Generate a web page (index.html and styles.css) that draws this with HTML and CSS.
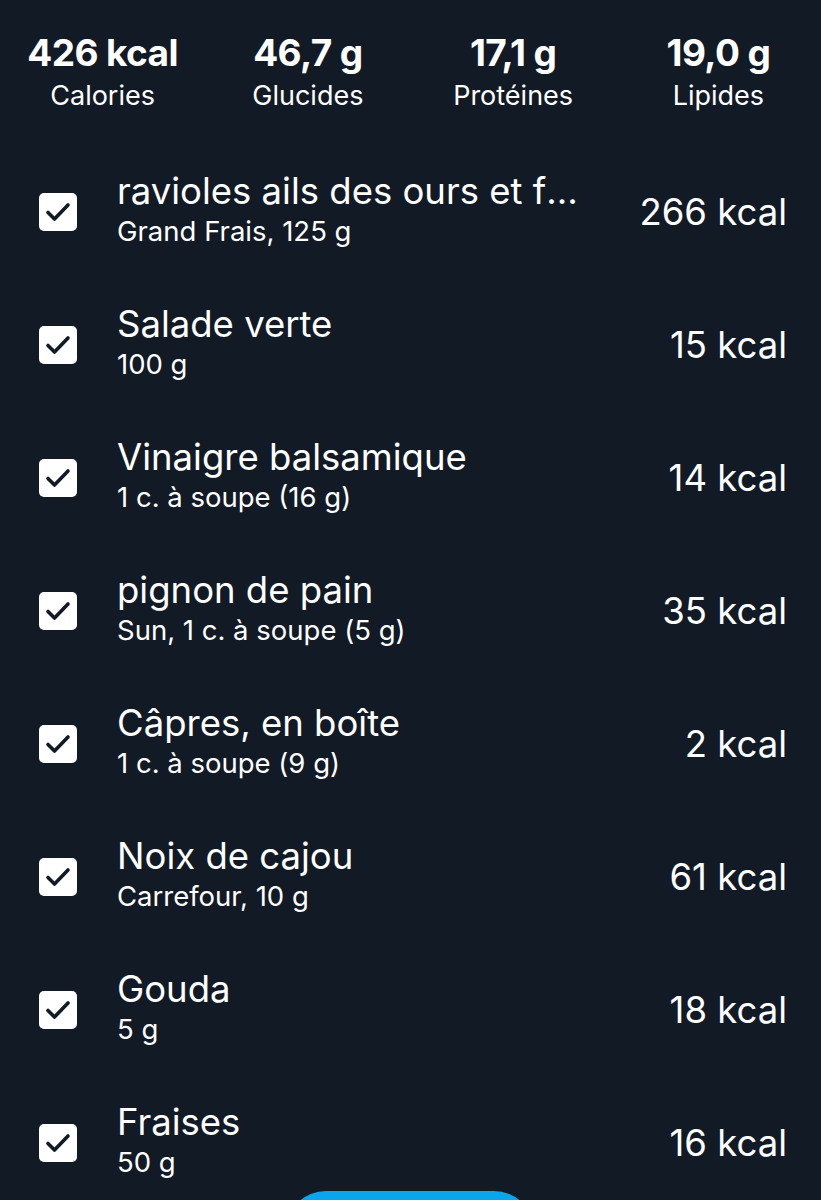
FILE: index.html
```html
<!DOCTYPE html>
<html lang="fr">
<head>
    <meta charset="UTF-8">
    <meta name="viewport" content="width=device-width, initial-scale=1.0">
    <title>Repas</title>
    <link rel="stylesheet" href="styles.css">
</head>
<body>

<div class="screen">
    <!-- Totaux du repas -->
    <div class="totals">
        <div class="total"><div class="value">426 kcal</div><div class="label">Calories</div></div>
        <div class="total"><div class="value">46,7 g</div><div class="label">Glucides</div></div>
        <div class="total"><div class="value">17,1 g</div><div class="label">Protéines</div></div>
        <div class="total"><div class="value">19,0 g</div><div class="label">Lipides</div></div>
    </div>

    <!-- Liste des aliments -->
    <ul class="foods">
        <li class="food">
            <span class="check"><svg viewBox="0 0 38 38"><path d="M9 19.5l6.5 6.5 13.5-14"/></svg></span>
            <div class="info"><div class="name">ravioles ails des ours et fraîcheur</div><div class="detail">Grand Frais, 125 g</div></div>
            <div class="kcal">266 kcal</div>
        </li>
        <li class="food">
            <span class="check"><svg viewBox="0 0 38 38"><path d="M9 19.5l6.5 6.5 13.5-14"/></svg></span>
            <div class="info"><div class="name">Salade verte</div><div class="detail">100 g</div></div>
            <div class="kcal">15 kcal</div>
        </li>
        <li class="food">
            <span class="check"><svg viewBox="0 0 38 38"><path d="M9 19.5l6.5 6.5 13.5-14"/></svg></span>
            <div class="info"><div class="name">Vinaigre balsamique</div><div class="detail">1 c. à soupe (16 g)</div></div>
            <div class="kcal">14 kcal</div>
        </li>
        <li class="food">
            <span class="check"><svg viewBox="0 0 38 38"><path d="M9 19.5l6.5 6.5 13.5-14"/></svg></span>
            <div class="info"><div class="name">pignon de pain</div><div class="detail">Sun, 1 c. à soupe (5 g)</div></div>
            <div class="kcal">35 kcal</div>
        </li>
        <li class="food">
            <span class="check"><svg viewBox="0 0 38 38"><path d="M9 19.5l6.5 6.5 13.5-14"/></svg></span>
            <div class="info"><div class="name">Câpres, en boîte</div><div class="detail">1 c. à soupe (9 g)</div></div>
            <div class="kcal">2 kcal</div>
        </li>
        <li class="food">
            <span class="check"><svg viewBox="0 0 38 38"><path d="M9 19.5l6.5 6.5 13.5-14"/></svg></span>
            <div class="info"><div class="name">Noix de cajou</div><div class="detail">Carrefour, 10 g</div></div>
            <div class="kcal">61 kcal</div>
        </li>
        <li class="food">
            <span class="check"><svg viewBox="0 0 38 38"><path d="M9 19.5l6.5 6.5 13.5-14"/></svg></span>
            <div class="info"><div class="name">Gouda</div><div class="detail">5 g</div></div>
            <div class="kcal">18 kcal</div>
        </li>
        <li class="food">
            <span class="check"><svg viewBox="0 0 38 38"><path d="M9 19.5l6.5 6.5 13.5-14"/></svg></span>
            <div class="info"><div class="name">Fraises</div><div class="detail">50 g</div></div>
            <div class="kcal">16 kcal</div>
        </li>
    </ul>

    <!-- Bouton flottant (en bas, à moitié visible) -->
    <button class="add-btn" aria-label="Ajouter"></button>
</div>

</body>
</html>
```
FILE: styles.css
```css
body {
    margin: 0;
    background-color: #121a26;
    color: #ffffff;
    font-family: Inter, "Noto Sans", sans-serif;
}

.screen {
    position: relative;
    height: 1200px;
    overflow: hidden;
}

.totals {
    display: grid;
    grid-template-columns: repeat(4, 1fr);
    padding-top: 31px;
    text-align: center;
}

.value {
    font-size: 37px;
    font-weight: 700;
    line-height: 44px;
    letter-spacing: -0.6px;
}

.label {
    font-size: 27px;
    line-height: 32px;
    margin-top: 5px;
}

.foods {
    list-style: none;
    margin: 0;
    padding: 33px 0 0 0;
}

.food {
    display: flex;
    align-items: center;
    height: 133px;
    padding: 0 34px 0 39px;
}

.check {
    width: 38px;
    height: 38px;
    flex-shrink: 0;
    border-radius: 5px;
    background-color: #ffffff;
    display: flex;
}

.check svg {
    width: 38px;
    height: 38px;
    fill: none;
    stroke: #121a26;
    stroke-width: 3.6;
    stroke-linecap: round;
    stroke-linejoin: round;
}

.info {
    flex: 1;
    min-width: 0;
    margin-left: 40px;
    margin-right: 48px;
    margin-top: -7px;
}

.name {
    font-size: 36.5px;
    line-height: 44px;
    white-space: nowrap;
    overflow: hidden;
    text-overflow: ellipsis;
}

.detail {
    font-size: 27.5px;
    line-height: 32px;
    margin-top: 2px;
}

.kcal {
    font-size: 36.5px;
    white-space: nowrap;
}

.add-btn {
    position: absolute;
    left: 286px;
    top: 1191px;
    width: 248px;
    height: 80px;
    border: none;
    border-radius: 40px;
    background-color: #0ba5ec;
}
```
